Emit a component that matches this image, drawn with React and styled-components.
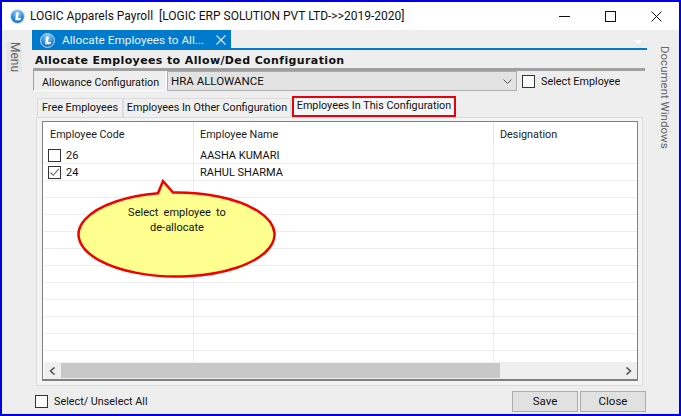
import React from 'react';
import styled, { createGlobalStyle } from 'styled-components';

const GlobalStyle = createGlobalStyle`
  html, body { margin: 0; padding: 0; background: #eeeeee; }
  body { font-family: Roboto, "Liberation Sans", Arial, sans-serif; font-size: 10.8px; color: #111; }
  * { box-sizing: border-box; }
`;

//Window
const Ventana = styled.div`
  width: 681px;
  height: 416px;
  border: 2px solid #0000e6;
  background: #eeeeee;
  display: flex;
  flex-direction: column;
  overflow: hidden;
`;
const TitleBar = styled.header`
  height: 28px;
  flex: none;
  background: #fff;
  display: flex;
  align-items: center;
  padding-left: 8px;
`;
const TitleText = styled.span`
  margin-left: 5px;
  font-size: 12px;
  white-space: pre;
  flex: 1;
`;
const WinButton = styled.div`
  width: 46px;
  height: 28px;
  display: flex;
  align-items: center;
  justify-content: center;
`;
const Cuerpo = styled.div`
  flex: 1;
  display: flex;
  min-height: 0;
`;
const SideRail = styled.aside`
  width: ${(props) => props.$width}px;
  flex: none;
  padding-top: 12px;
  padding-left: ${(props) => props.$left}px;
`;
const SideLabel = styled.div`
  writing-mode: vertical-rl;
  height: ${(props) => props.$height}px;
  width: 15px;
  background: ${(props) => props.$bg};
  color: #666;
  font-size: ${(props) => props.$size}px;
  line-height: 15px;
  white-space: nowrap;
  text-align: center;
`;
const Documento = styled.main`
  flex: 1;
  min-width: 0;
  display: flex;
  flex-direction: column;
`;
const DocTabs = styled.div`
  height: 20px;
  flex: none;
  border-bottom: 2px solid #007acc;
  position: relative;
`;
const DocTab = styled.div`
  width: 199px;
  height: 20px;
  background: #007acc;
  color: #e8f4fb;
  display: flex;
  align-items: center;
  padding-left: 8px;
  font-size: 11.8px;
`;
const DocTabTitle = styled.span`
  margin-left: 7px;
  flex: 1;
`;
const DocTabClose = styled.div`
  width: 15px;
  display: flex;
  align-items: center;
`;
const TabMenuArrow = styled.div`
  position: absolute;
  right: 5px;
  top: 10px;
  width: 0;
  height: 0;
  border-left: 4px solid transparent;
  border-right: 4px solid transparent;
  border-top: 4px solid #fff;
`;
const Heading = styled.h1`
  margin: 0;
  height: 18px;
  flex: none;
  padding: 3px 0 0 3px;
  font-family: "DejaVu Sans", Verdana, sans-serif;
  font-size: 11px;
  line-height: 15px;
  font-weight: 700;
  color: #111;
  letter-spacing: 0.38px;
  white-space: nowrap;
`;
const Panel = styled.div`
  flex: 1;
  min-height: 0;
  display: flex;
  flex-direction: column;
  position: relative;
`;
const ConfigRow = styled.div`
  height: 23px;
  flex: none;
  margin-left: 1px;
  width: 612px;
  border-top: 3px solid #a0a0a0;
  display: flex;
  align-items: stretch;
`;
const ConfigLabel = styled.div`
  width: 134px;
  flex: none;
  border-left: 1px solid #a0a0a0;
  border-bottom: 1px solid #fff;
  border-right: 1px solid #fff;
  padding: 5px 0 0 8px;
  white-space: nowrap;
`;
const Combo = styled.div`
  width: 350px;
  flex: none;
  height: 20px;
  background: #e3e3e3;
  border: 1px solid #adadad;
  padding-left: 3px;
  display: flex;
  align-items: center;
  justify-content: space-between;
  font-size: 11.5px;
`;
const ComboArrow = styled.div`
  width: 17px;
  display: flex;
  justify-content: center;
`;
const CheckBox = styled.div`
  width: 13px;
  height: 13px;
  flex: none;
  background: #fff;
  border: 1px solid #333;
  display: flex;
  align-items: center;
  justify-content: center;
`;
const CheckWrap = styled.label`
  display: flex;
  align-items: center;
  gap: 6px;
  margin-left: ${(props) => props.$left || 0}px;
  white-space: nowrap;
`;
const TabStrip = styled.div`
  height: 22px;
  flex: none;
  margin-top: 4px;
  padding-left: 5px;
  display: flex;
  align-items: flex-end;
`;
const SubTab = styled.div`
  width: ${(props) => props.$width}px;
  height: 19px;
  text-align: center;
  background: #f0f0f0;
  border: 1px solid #dcdcdc;
  border-bottom: 0;
  line-height: 18px;
  white-space: nowrap;
`;
const ActiveTab = styled.div`
  height: 21px;
  width: 164px;
  background: #f6f6f6;
  border: 2px solid #e8000b;
  line-height: 15px;
  text-align: center;
  white-space: nowrap;
  margin-left: 1px;
`;
const TabBody = styled.div`
  width: 607px;
  height: 269px;
  flex: none;
  margin-left: 4px;
  border: 1px solid #dcdcdc;
  padding: 3px 4px 4px 5px;
  background: #f4f4f4;
`;
const Grid = styled.div`
  height: 100%;
  border: 1px solid #808080;
  border-bottom-width: 2px;
  padding-left: 1px;
  background: #fff;
  display: flex;
  flex-direction: column;
`;
const GridHead = styled.div`
  display: grid;
  grid-template-columns: 150px 300px 1fr;
  height: 25px;
  flex: none;
`;
const HeadCell = styled.div`
  padding: 6px 0 0 6px;
  color: #222;
  border-right: 1px solid #e6e6e6;
  &:last-child { border-right: 0; }
`;
const GridBody = styled.div`
  flex: 1;
  min-height: 0;
  overflow: hidden;
`;
const Row = styled.div`
  display: grid;
  grid-template-columns: 150px 300px 1fr;
  height: 17px;
  border-bottom: 1px solid #ececec;
`;
const Cell = styled.div`
  font-size: 11px;
  line-height: 15px;
  padding-left: ${(props) => props.$pad || 6}px;
  border-right: 1px solid #ececec;
  display: flex;
  align-items: center;
  gap: 5px;
  &:last-child { border-right: 0; }
`;
const ScrollBar = styled.div`
  height: 17px;
  flex: none;
  background: #efefef;
  display: flex;
  align-items: center;
  justify-content: space-between;
`;
const ScrollThumb = styled.div`
  width: 439px;
  height: 15px;
  margin-right: auto;
  background: #c8c8c8;
`;
const ScrollBtn = styled.div`
  width: 17px;
  height: 17px;
  flex: none;
  display: flex;
  align-items: center;
  justify-content: center;
`;
const Footer = styled.footer`
  height: 28px;
  flex: none;
  width: 614px;
  padding: 2px 0 0 3px;
  display: flex;
  align-items: center;
`;
const FootButton = styled.button`
  width: 66px;
  height: 21px;
  margin-left: ${(props) => props.$left}px;
  padding: 0;
  background: #e1e1e1;
  border: 1px solid #adadad;
  font: inherit;
  font-size: 11.5px;
  color: #111;
`;
const Spacer = styled.div`
  flex: 1;
`;
const Callout = styled.div`
  position: absolute;
  left: 44px;
  top: 110px;
  width: 202px;
  height: 102px;
`;
const CalloutShape = styled.svg`
  position: absolute;
  inset: 0;
`;
const CalloutText = styled.div`
  position: absolute;
  left: 0;
  right: 0;
  top: 27px;
  text-align: center;
  font-size: 11px;
  line-height: 15px;
  word-spacing: 2.5px;
  color: #111;
`;

const LogoL = ({ id, size }) => (
  <svg width={size} height={size} viewBox="0 0 16 16" style={{ flex: 'none' }}>
    <defs>
      <radialGradient id={id} cx="0.5" cy="0.25" r="0.8">
        <stop offset="0" stopColor="#9fd4f7" />
        <stop offset="0.55" stopColor="#2b8fe0" />
        <stop offset="1" stopColor="#0f5fb5" />
      </radialGradient>
    </defs>
    <circle cx="8" cy="8" r="7.4" fill={`url(#${id})`} stroke="#d5e8f6" strokeWidth="1" />
    <path d="M6.5 3.8 H9.3 L8.6 9.6 H11.6 L11.2 12 H5.6 Z" fill="#fff" />
  </svg>
);

const Tick = () => (
  <svg width="11" height="11" viewBox="0 0 11 11">
    <path d="M1.5 5.5 L4.3 8.3 L9.8 1.8" fill="none" stroke="#666" strokeWidth="1.1" />
  </svg>
);

const filas = [
  { code: '26', name: 'AASHA KUMARI', checked: false },
  { code: '24', name: 'RAHUL SHARMA', checked: true },
  ...Array.from({ length: 11 }, () => null),
];

const App = () => (
  <>
    <GlobalStyle />
    <Ventana>
      <TitleBar>
        <LogoL id="logoTitulo" size={15} />
        <TitleText>LOGIC Apparels Payroll  [LOGIC ERP SOLUTION PVT LTD-&gt;&gt;2019-2020]</TitleText>
        <WinButton>
          <svg width="11" height="11" viewBox="0 0 11 11"><path d="M0 5.5 H11" stroke="#111" /></svg>
        </WinButton>
        <WinButton>
          <svg width="11" height="11" viewBox="0 0 11 11"><rect x="0.5" y="0.5" width="10" height="10" fill="none" stroke="#111" /></svg>
        </WinButton>
        <WinButton>
          <svg width="11" height="11" viewBox="0 0 11 11"><path d="M0.5 0.5 L10.5 10.5 M10.5 0.5 L0.5 10.5" stroke="#111" /></svg>
        </WinButton>
      </TitleBar>
      <Cuerpo>
        <SideRail $width={30} $left={5}>
          <SideLabel $height={30} $bg="#e6e6e6" $size={12}>Menu</SideLabel>
        </SideRail>
        <Documento>
          <DocTabs>
            <DocTab>
              <LogoL id="logoTab" size={15} />
              <DocTabTitle>Allocate Employees to All...</DocTabTitle>
              <DocTabClose>
                <svg width="10" height="10" viewBox="0 0 10 10"><path d="M0.5 0.5 L9.5 9.5 M9.5 0.5 L0.5 9.5" stroke="#d8ecf8" strokeWidth="1.1" /></svg>
              </DocTabClose>
            </DocTab>
            <TabMenuArrow />
          </DocTabs>
          <Heading>Allocate Employees to Allow/Ded Configuration</Heading>
          <Panel>
            <ConfigRow>
              <ConfigLabel>Allowance Configuration</ConfigLabel>
              <Combo>
                HRA ALLOWANCE
                <ComboArrow>
                  <svg width="9" height="5" viewBox="0 0 9 5"><path d="M0.5 0.5 L4.5 4.5 L8.5 0.5" fill="none" stroke="#555" /></svg>
                </ComboArrow>
              </Combo>
              <CheckWrap $left={5}><CheckBox />Select Employee</CheckWrap>
            </ConfigRow>
            <TabStrip>
              <SubTab $width={86}>Free Employees</SubTab>
              <SubTab $width={168}>Employees In Other Configuration</SubTab>
              <ActiveTab>Employees In This Configuration</ActiveTab>
            </TabStrip>
            <TabBody>
              <Grid>
                <GridHead>
                  <HeadCell>Employee Code</HeadCell>
                  <HeadCell>Employee Name</HeadCell>
                  <HeadCell>Designation</HeadCell>
                </GridHead>
                <GridBody>
                  {filas.map((fila, i) => (
                    <Row key={i}>
                      <Cell $pad={4}>
                        {fila && <CheckBox>{fila.checked && <Tick />}</CheckBox>}
                        {fila && fila.code}
                      </Cell>
                      <Cell>{fila && fila.name}</Cell>
                      <Cell />
                    </Row>
                  ))}
                </GridBody>
                <ScrollBar>
                  <ScrollBtn>
                    <svg width="7" height="8" viewBox="0 0 7 8"><path d="M5.5 0.5 L1.5 4 L5.5 7.5" fill="none" stroke="#555" strokeWidth="1.6" /></svg>
                  </ScrollBtn>
                  <ScrollThumb />
                  <ScrollBtn>
                    <svg width="7" height="8" viewBox="0 0 7 8"><path d="M1.5 0.5 L5.5 4 L1.5 7.5" fill="none" stroke="#555" strokeWidth="1.6" /></svg>
                  </ScrollBtn>
                </ScrollBar>
              </Grid>
            </TabBody>
            <Callout>
              <CalloutShape width="202" height="102" viewBox="0 0 202 102">
                <path
                  d="M82 15.26 L87 3 L97 14.53 A98 42 0 1 1 82 15.26 Z"
                  fill="#ffff8f"
                  stroke="#f00000"
                  strokeWidth="2.5"
                />
              </CalloutShape>
              <CalloutText>Select employee to<br />de-allocate</CalloutText>
            </Callout>
            <Footer>
              <CheckWrap><CheckBox />Select/ Unselect All</CheckWrap>
              <Spacer />
              <FootButton $left={0}>Save</FootButton>
              <FootButton $left={2}>Close</FootButton>
            </Footer>
          </Panel>
        </Documento>
        <SideRail $width={32} $left={10}>
          <SideLabel $height={110} $bg="transparent" $size={11.5}>Document Windows</SideLabel>
        </SideRail>
      </Cuerpo>
    </Ventana>
  </>
);

export default App;
